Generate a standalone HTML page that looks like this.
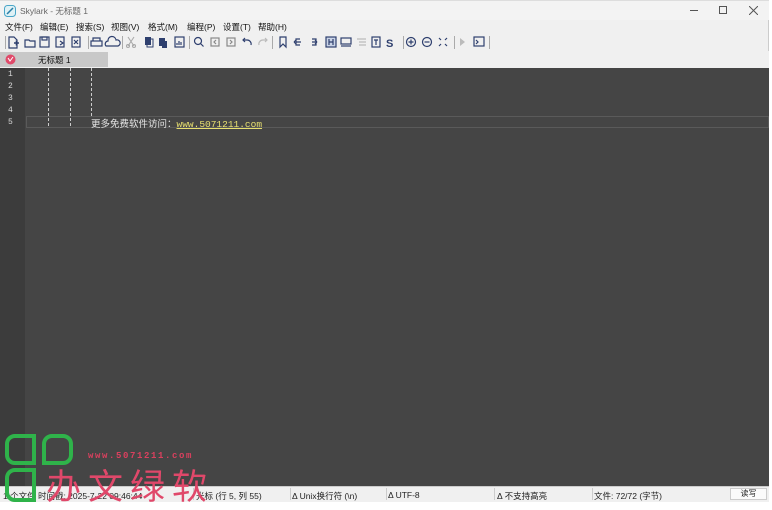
<!DOCTYPE html>
<html><head><meta charset="utf-8"><style>
*{margin:0;padding:0;box-sizing:border-box}
body{width:772px;height:502px;background:#fff;font-family:"Liberation Sans","Noto Sans CJK SC",sans-serif;position:relative;overflow:hidden;font-size:9px;color:#222}
.abs{position:absolute}
#win{left:0;top:0;width:769px;height:502px;background:#f0f0f0;border-right:1px solid #ccc}
#title{left:0;top:0;width:769px;height:20px;background:#f3f3f3;border-top:1px solid #ddd}
#menu{left:0;top:20px;height:13px;width:769px}
#menu span{position:absolute;top:1px;font-size:8.5px;color:#111}
.sep{position:absolute;top:36px;width:1px;height:13px;background:#aaa}
#tabbar{left:0;top:51px;width:769px;height:17px;background:#f0f0f0}
#tab{left:0;top:52px;width:108px;height:15px;background:#c8c8c8}
#editor{left:0;top:68px;width:769px;height:418px;background:#454545}
#gutter{left:0;top:68px;width:25px;height:418px;background:#3c3c3c}
.ln{position:absolute;left:8px;font-size:8px;color:#d8d8d8;font-family:"Liberation Mono",monospace}
.guide{position:absolute;top:68px;width:0;height:58px;border-left:1px dashed #ccc}
#status{left:0;top:486px;width:769px;height:16px;background:#f0f0f0;border-top:1px solid #ccc}
#status span{position:absolute;top:3px;font-size:8.5px;color:#222}
.ss{position:absolute;top:488px;width:1px;height:12px;background:#ccc}
</style></head><body>
<div id="win" class="abs"></div>
<div id="title" class="abs">
<svg class="abs" style="left:4px;top:4px" width="12" height="12"><rect x="0.5" y="0.5" width="11" height="11" rx="3" fill="#dff1f5" stroke="#4aa6c8"/><path d="M3 9 L9 3" stroke="#2a7fa8" stroke-width="1.5"/></svg>
<span class="abs" style="left:20px;top:4px;font-size:8.5px;color:#666">Skylark - 无标题 1</span>
<div class="abs" style="left:690px;top:9px;width:8px;height:1px;background:#555"></div>
<div class="abs" style="left:719px;top:5px;width:8px;height:8px;border:1px solid #555"></div>
<svg class="abs" style="left:749px;top:5px" width="9" height="9"><path d="M0 0L9 9M9 0L0 9" stroke="#555" stroke-width="1"/></svg>
</div>
<div id="menu" class="abs">
<span style="left:5px">文件(F)</span><span style="left:40px">编辑(E)</span><span style="left:76px">搜索(S)</span><span style="left:111px">视图(V)</span><span style="left:148px">格式(M)</span><span style="left:187px">编程(P)</span><span style="left:223px">设置(T)</span><span style="left:258px">帮助(H)</span>
</div>
<svg class="abs" style="left:0;top:33px" width="500" height="18">
<g fill="none" stroke="#2e3f6e" stroke-width="1.2">
<path d="M9 4h5l3 3v8h-8z"/><path d="M14 10h5M16.5 7.5v5" stroke-width="1.6"/>
<path d="M25 7h4l1 1h5v6h-10z"/>
<rect x="40" y="4" width="9" height="10"/><rect x="42" y="4" width="5" height="3"/>
<rect x="56" y="4" width="8" height="10"/><path d="M60 8l3 2-3 2"/>
<rect x="72" y="4" width="8" height="10"/><path d="M74 7l4 4M78 7l-4 4"/>
<rect x="91" y="8" width="11" height="5"/><path d="M93 8v-3h7v3"/>
<path d="M106 13h12a3 3 0 0 0-2-6a4 4 0 0 0-8 1a3 3 0 0 0-2 5z"/>
</g>
<g fill="none" stroke="#aaa" stroke-width="1.1"><path d="M128 4l6 9M134 4l-6 9"/><circle cx="128" cy="13" r="1.5"/><circle cx="134" cy="13" r="1.5"/></g>
<g fill="#2e3f6e"><rect x="145" y="4" width="6" height="8"/><rect x="147" y="6" width="6" height="8" fill="none" stroke="#2e3f6e"/>
<rect x="159" y="5" width="6" height="8"/><rect x="162" y="8" width="5" height="7"/></g>
<g fill="none" stroke="#2e3f6e" stroke-width="1.2"><rect x="175" y="4" width="9" height="10"/><path d="M177 12v-2M179 12v-4M181 12v-3"/>
<circle cx="198" cy="8" r="3.5"/><path d="M200.5 10.5l3 3"/>
<rect x="211" y="5" width="8" height="8" stroke="#888"/><path d="M216 7l-2 2 2 2" stroke="#888"/>
<rect x="227" y="5" width="8" height="8" stroke="#888"/><path d="M230 7l2 2-2 2" stroke="#888"/>
<path d="M251 12a4 4 0 0 0-4-5h-4M245 5l-2 2 2 2"/>
<path d="M259 12a4 4 0 0 1 4-5h4M265 5l2 2-2 2" stroke="#bbb"/>
<path d="M280 4h6v10l-3-3-3 3z"/>
<path d="M300 6h-4v6h4M296 9h5M294 9l2-2M294 9l2 2"/>
<path d="M312 6h4v6h-4M312 9h5M317 9l-2-2M317 9l-2 2"/>
<rect x="326" y="4" width="10" height="10" fill="#c9d3e6"/><path d="M329 6v6M333 6v6M329 9h4"/>
<rect x="341" y="5" width="10" height="6"/><path d="M341 13h10"/>
<path d="M357 6h9M359 9h7M359 12h7" stroke="#bbb"/>
<rect x="372" y="4" width="8" height="10"/><path d="M374 7h4M376 7v5"/>
<circle cx="411" cy="9" r="4.5"/><path d="M408.5 9h5M411 6.5v5"/>
<circle cx="427" cy="9" r="4.5"/><path d="M424.5 9h5"/>
<path d="M439 5l2 2M447 5l-2 2M439 13l2-2M447 13l-2-2"/>
<rect x="474" y="4" width="10" height="9"/><path d="M476 7l2 2-2 2"/>
</g>
<text x="386" y="14" font-size="11" font-weight="bold" fill="#2e3f6e" font-family="Liberation Sans">S</text>
<path d="M460 5v8l5-4z" fill="#bbb"/>
</svg>
<div class="sep" style="left:5px"></div><div class="sep" style="left:88px"></div><div class="sep" style="left:122px"></div><div class="sep" style="left:189px"></div><div class="sep" style="left:272px"></div><div class="sep" style="left:403px"></div><div class="sep" style="left:454px"></div><div class="sep" style="left:489px"></div>
<div id="tabbar" class="abs"></div>
<div id="tab" class="abs"><svg class="abs" style="left:5px;top:2px" width="11" height="11"><circle cx="5.5" cy="5.5" r="5" fill="#e04a6a"/><path d="M3 4l2 3 3-4" stroke="#fff" fill="none"/></svg><span class="abs" style="left:38px;top:2px;font-size:8.5px;color:#111">无标题 1</span></div>
<div id="editor" class="abs"></div>
<div id="gutter" class="abs"></div>
<span class="ln" style="top:70px">1</span><span class="ln" style="top:82px">2</span><span class="ln" style="top:94px">3</span><span class="ln" style="top:106px">4</span><span class="ln" style="top:118px">5</span>
<div class="abs" style="left:26px;top:116px;width:743px;height:12px;border:1px solid #5a5a5a"></div>
<div class="guide" style="left:48px"></div><div class="guide" style="left:70px"></div><div class="guide" style="left:91px;height:48px"></div>
<span class="abs" style="left:91px;top:116px;font-size:9.5px;color:#e6e6e6;font-family:'Liberation Mono','Noto Sans CJK SC',monospace">更多免费软件访问：<span style="color:#e8e070;text-decoration:underline">www.5071211.com</span></span>
<div id="status" class="abs">
<span style="left:3px">1 个文件 时间戳: 2025-7-22 09:46:44</span>
<span style="left:196px">光标 (行 5, 列 55)</span>
<span style="left:292px">Δ Unix换行符 (\n)</span>
<span style="left:388px">Δ UTF-8</span>
<span style="left:497px">Δ 不支持高亮</span>
<span style="left:594px">文件: 72/72 (字节)</span>
<div class="abs" style="left:730px;top:1px;width:37px;height:12px;background:#fbfbfb;border:1px solid #ccc;font-size:8px;text-align:center;line-height:10px">读写</div>
</div>
<div class="ss" style="left:193px"></div><div class="ss" style="left:290px"></div><div class="ss" style="left:386px"></div><div class="ss" style="left:494px"></div><div class="ss" style="left:592px"></div>
<svg class="abs" style="left:5px;top:433px" width="72" height="69"><g fill="none" stroke="#2fb34a" stroke-width="4"><path d="M10 3h19v27h-19a8 8 0 0 1-8-8v-11a8 8 0 0 1 8-8z"/><path d="M39 30v-19a8 8 0 0 1 8-8h11a8 8 0 0 1 8 8v11a8 8 0 0 1-8 8z"/><path d="M10 37h19v30h-19a8 8 0 0 1-8-8v-14a8 8 0 0 1 8-8z"/></g></svg>
<span class="abs" style="left:88px;top:451px;font-size:9px;font-weight:bold;letter-spacing:1.6px;color:#d9405e;font-family:'Liberation Mono',monospace">www.5071211.com</span>
<span class="abs" style="left:46px;top:464px;font-size:35px;letter-spacing:7px;color:#e0486a;font-family:'Noto Sans CJK SC',sans-serif;line-height:42px;white-space:nowrap">办文绿软</span>
</body></html>
